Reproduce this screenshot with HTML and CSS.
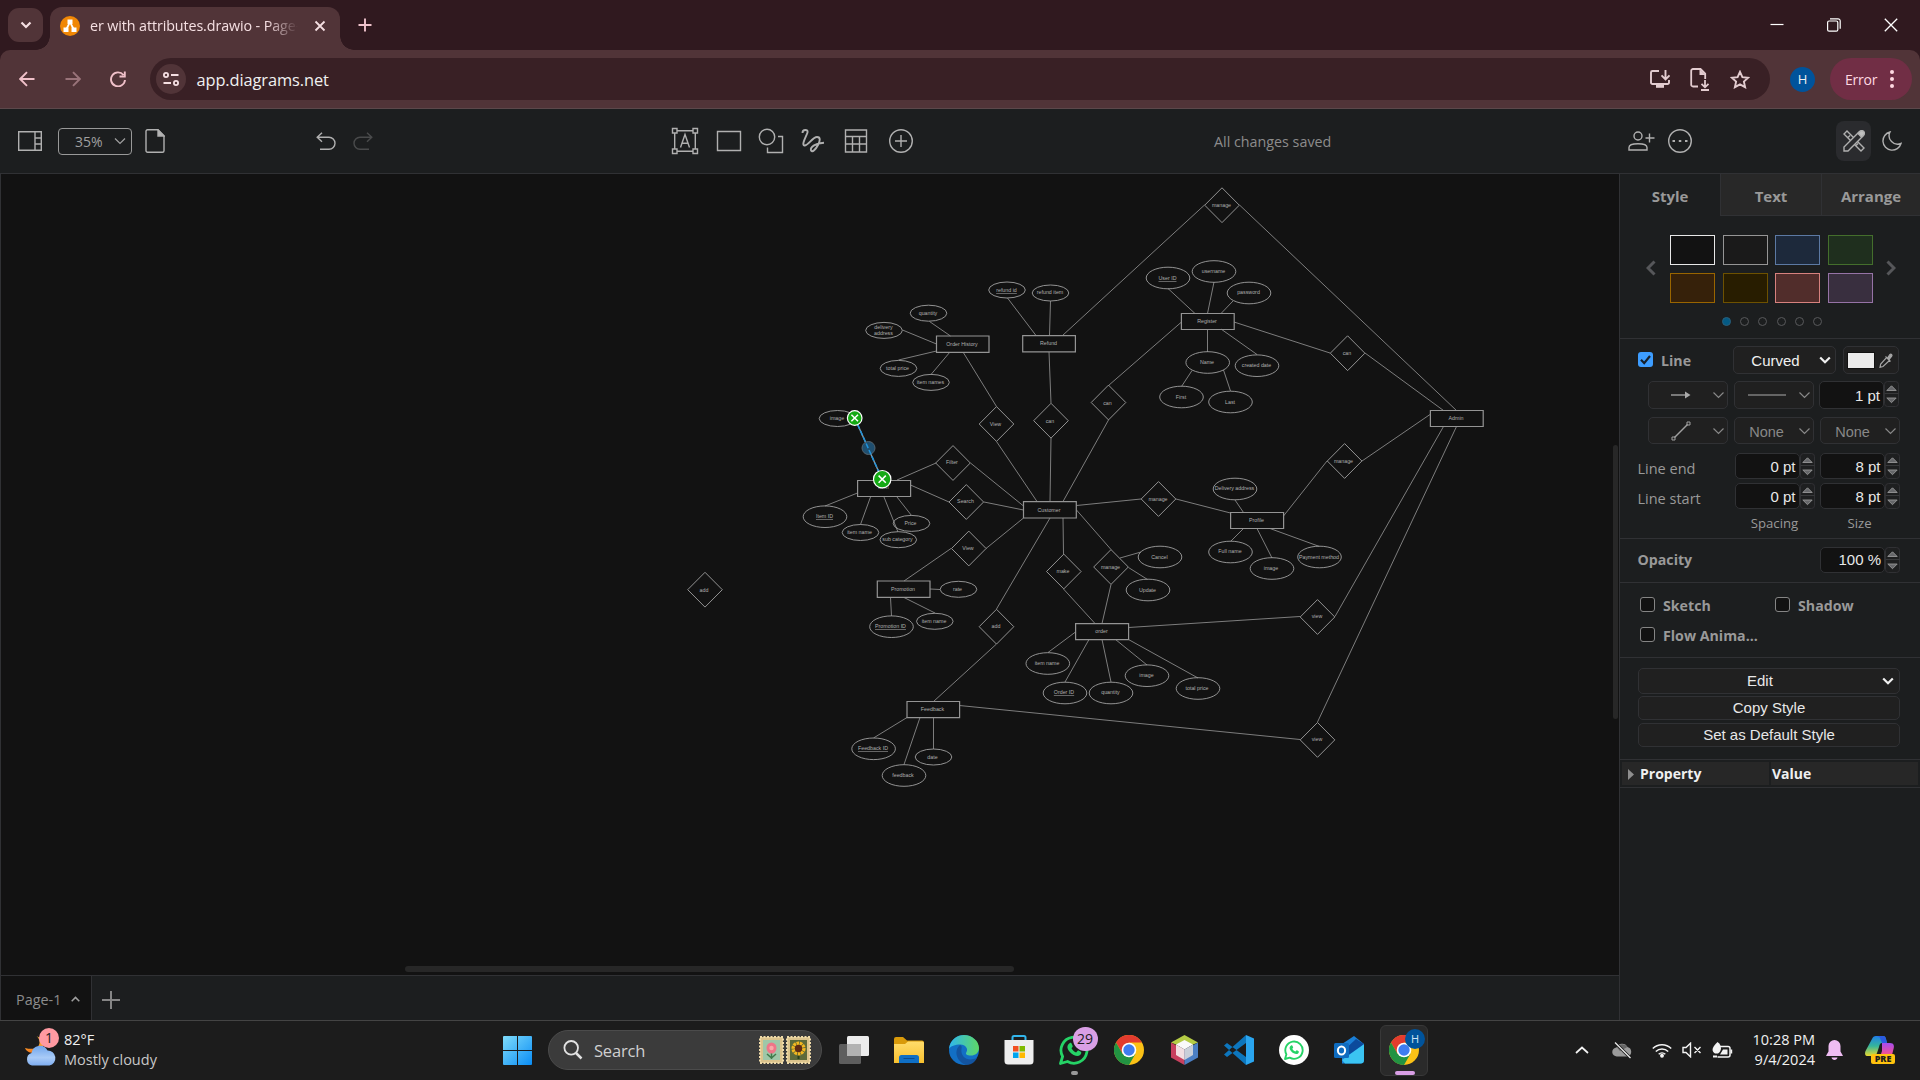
FILE: index.html
```html
<!DOCTYPE html>
<html lang="en">
<head>
<meta charset="utf-8">
<title>er with attributes.drawio - Page-1</title>
<link rel="stylesheet" href="styles.css">
</head>
<body>
<svg width="0" height="0" class="defs">
  <defs>
    <symbol id="chrome" viewBox="0 0 30 30">
      <circle cx="15" cy="15" r="15" fill="#fbc116"/>
      <path d="M2 7.500A15 15 0 0 1 28 7.500L15 7.500L8.500 18.700Z" fill="#e33b2e"/>
      <path d="M2 7.500A15 15 0 0 0 15 30L21.500 18.700L8.500 18.700Z" fill="#229342"/>
      <circle cx="15" cy="15" r="7.300" fill="#fff"/><circle cx="15" cy="15" r="5.700" fill="#3f7cf0"/>
    </symbol>
    <symbol id="wa" viewBox="0 0 30 30">
      <path d="M1.500 28.500L3.600 21.500A13 13 0 1 1 8.500 26.500Z" fill="none" stroke="currentColor" stroke-width="2.800" stroke-linejoin="round"/>
      <path d="M10.500 8.300c1-.8 1.800-.6 2.200.4l1 2.300c.3.800-.8 1.600-1.200 2.200 1 2 2.500 3.300 4.600 4.200l1.500-1.700c.5-.5 1-.3 3.300 1 .9.500.2 2.600-.8 3.400-1.700 1.300-4 1-6.500-.2-3-1.500-6-5-6.200-7.700-.1-1.600 1.100-3.200 2.100-3.900Z" fill="currentColor"/>
    </symbol>
    <symbol id="down" viewBox="0 0 12 8"><path d="M1 1.500l5 5 5-5" fill="none" stroke="currentColor" stroke-width="1.200"/></symbol>
    <symbol id="steps" viewBox="0 0 15 26">
      <rect x=".5" y=".5" width="14" height="25" rx="3" fill="#1e1f20" stroke="#303134"/>
      <path d="M.500 12.500h14" stroke="#38393b"/>
      <path d="M2.800 9.500l4.700-4.700 4.700 4.700z M2.800 17l4.700 4.700 4.700-4.700z" fill="#66676a" stroke="#969696" stroke-width=".9"/>
    </symbol>
    <linearGradient id="winG" x1="0" y1="0" x2="1" y2="1"><stop offset="0" stop-color="#7fdcfb"/><stop offset="1" stop-color="#0a8df5"/></linearGradient>
    <linearGradient id="edgeG" x1="0" y1="0" x2="1" y2="0"><stop offset="0" stop-color="#2fb7ee"/><stop offset="1" stop-color="#5ed765"/></linearGradient>
    <linearGradient id="folderG" x1="0" y1="0" x2="0" y2="1"><stop offset="0" stop-color="#ffdc6b"/><stop offset="1" stop-color="#f8c02e"/></linearGradient>
    <linearGradient id="cloudG" x1="0" y1="0" x2="0" y2="1"><stop offset="0" stop-color="#6fa5ec"/><stop offset=".6" stop-color="#a9cbf7"/><stop offset="1" stop-color="#7eadf0"/></linearGradient>
    <linearGradient id="moonG" x1="0" y1="0" x2="0" y2="1"><stop offset="0" stop-color="#ffc440"/><stop offset="1" stop-color="#f37a1c"/></linearGradient>
    <linearGradient id="copA" x1="0" y1="0" x2="0" y2="1"><stop offset="0" stop-color="#1f7fe8"/><stop offset=".5" stop-color="#35b59b"/><stop offset="1" stop-color="#e9d92e"/></linearGradient>
    <linearGradient id="copB" x1="0" y1="0" x2="0" y2="1"><stop offset="0" stop-color="#a44df0"/><stop offset=".6" stop-color="#ee4f9b"/><stop offset="1" stop-color="#fb8a4a"/></linearGradient>
  </defs>
</svg>

<div class="tabstrip">
  <div class="tab-search"><svg width="12" height="8" viewBox="0 0 12 8"><path d="M1.500 1.500L6 6l4.500-4.500" fill="none" stroke="#f5dfe2" stroke-width="2.200"/></svg></div>
  <div class="tab">
    <svg width="20" height="20" viewBox="0 0 20 20"><circle cx="10" cy="10" r="10" fill="#f08705"/><path d="M10 6L6 14M10 6l4 8" stroke="#fff" stroke-width="1.700"/><path d="M7.500 3.500h5v4.600h-5zM3.500 11.500h5v4.600h-5zM11.500 11.500h5v4.600h-5z" fill="#fff"/></svg>
    <span class="tab-title">er with attributes.drawio - Page-1</span>
    <svg width="12" height="12" viewBox="0 0 12 12"><path d="M1.500 1.500l9 9M10.500 1.500l-9 9" stroke="#f5dfe2" stroke-width="1.800"/></svg>
  </div>
  <svg class="new-tab" width="14" height="14" viewBox="0 0 14 14"><path d="M7 .5v13M.5 7h13" stroke="#efc3cc" stroke-width="1.900"/></svg>
  <div class="win">
    <svg width="14" height="14" viewBox="0 0 14 14"><path d="M.5 6.500h13" stroke="#fff" stroke-width="1.200"/></svg>
    <svg width="14" height="14" viewBox="0 0 14 14" fill="none" stroke="#fff" stroke-width="1.200"><rect x=".6" y="3" width="10.200" height="10.200" rx="1.500"/><path d="M3 .8h8a2.200 2.200 0 0 1 2.200 2.200v7.800"/></svg>
    <svg width="14" height="14" viewBox="0 0 14 14"><path d="M.8.8l12.400 12.400M13.200.8L.8 13.200" stroke="#fff" stroke-width="1.300"/></svg>
  </div>
</div>

<div class="navwrap"><div class="nav">
  <div class="navbtns">
    <svg width="16" height="16" viewBox="0 0 16 16" class="pink"><path d="M15.500 8H1.500M8 1.200L1.200 8 8 14.800"/></svg>
    <svg width="16" height="16" viewBox="0 0 16 16" class="pink dim"><path d="M.5 8h14M8 1.200L14.800 8 8 14.800"/></svg>
    <svg width="16" height="16" viewBox="0 0 16 16" class="pink"><path d="M13.500 4A7 7 0 1 0 15 9M14.800.5v5h-5.300"/></svg>
  </div>
  <div class="omnibox">
    <div class="site"><svg width="16" height="14" viewBox="0 0 16 14" fill="none" stroke="#f5dfe2" stroke-width="1.800"><circle cx="3" cy="3" r="2.100"/><path d="M8 3h7.500M.5 11H8"/><circle cx="13" cy="11" r="2.100"/></svg></div>
    <span class="url">app.diagrams.net</span>
    <div class="omni-icons">
      <svg width="20" height="18" viewBox="0 0 20 18"><path d="M9 1H2.500A1.500 1.500 0 0 0 1 2.500v10A1.500 1.500 0 0 0 2.500 14h15a1.500 1.500 0 0 0 1.500-1.500V10M15.500 0v9M11.500 5.300l4 4 4-4" fill="none" stroke="#e3ccd0" stroke-width="1.900"/><path d="M6 14h8v3.800H6z" fill="#e3ccd0"/></svg>
      <svg width="20" height="23" viewBox="0 0 20 23"><path d="M8 18.500H3A1.800 1.800 0 0 1 1.200 16.700V2.800A1.800 1.800 0 0 1 3 1h7.500l4.700 4.700V11M15 12v7M11.500 15.800l3.500 3.500 3.500-3.500M11 22h8" fill="none" stroke="#e3ccd0" stroke-width="1.800"/><path d="M9.500 1l6 6h-6z" fill="#e3ccd0"/></svg>
      <svg width="20" height="19" viewBox="0 0 20 19"><path d="M10 1.800l2.400 5.300 5.800.6-4.300 3.900 1.200 5.600L10 14.300l-5.100 2.900 1.200-5.600L1.800 7.700l5.800-.6z" fill="none" stroke="#e3ccd0" stroke-width="1.900"/></svg>
    </div>
  </div>
  <div class="avatar">H</div>
  <div class="error"><span>Error</span><svg width="4" height="18" viewBox="0 0 4 18" fill="#ffd9e2"><circle cx="2" cy="2" r="2"/><circle cx="2" cy="9" r="2"/><circle cx="2" cy="16" r="2"/></svg></div>
</div></div>

<div class="appbar">
  <svg class="i-side" width="24" height="20" viewBox="0 0 24 20"><path d="M.7.700h22.600v18.600H.7zM17 .7v18.600M17 7h6M17 13h6"/></svg>
  <div class="zoomsel"><span>35%</span><svg width="12" height="8"><use href="#down"/></svg></div>
  <svg class="i-file" width="20" height="24" viewBox="0 0 20 24"><path d="M2.500.7h10.500l6 6v15a1.500 1.500 0 0 1-1.500 1.500h-15A1.500 1.500 0 0 1 1 21.700V2.200A1.500 1.500 0 0 1 2.500.7z"/><path d="M13 1v6h6z" fill="#b5b5b5"/></svg>
  <svg class="i-undo" width="20" height="18" viewBox="0 0 20 18"><path d="M6 .7L1.200 5.200 6 9.700M1.500 5.200h11.500a6 6 0 0 1 0 12H4"/></svg>
  <svg class="i-redo" width="20" height="18" viewBox="0 0 20 18"><path d="M14 .7l4.800 4.500L14 9.700M18.500 5.200H7a6 6 0 0 0 0 12h9"/></svg>
  <div class="inserts">
    <svg width="28" height="28" viewBox="0 0 28 28"><path d="M1.500 1.500h4.500v4.500H1.500zM22 1.500h4.500v4.500H22zM1.500 22h4.500v4.500H1.500zM22 22h4.500v4.500H22zM6 3.700h16M6 24.300h16M3.700 6v16M24.300 6v16M9.500 20.500L14 7.500l4.500 13M11 16.300h6"/></svg>
    <svg width="28" height="28" viewBox="0 0 28 28"><path d="M2.500 4.500h23v19h-23z"/></svg>
    <svg width="28" height="28" viewBox="0 0 28 28"><circle cx="10" cy="10" r="7.700"/><path d="M21 9.500h4.500v16h-15v-5"/></svg>
    <svg width="28" height="28" viewBox="0 0 28 28"><path d="M3.500 6c0-4 6-4 5-.5C7.500 9 2 18 5.500 18.500c3.500.5 8-8.500 12.500-8.500 4 0 3 4 1 8-2 4-6 8-7 5.500-1.200-3.500 5-7.500 13-7.800" stroke-width="1.900"/></svg>
    <svg width="28" height="28" viewBox="0 0 28 28"><path d="M3.500 3h21v22h-21zM3.500 9.500h21M3.500 17h21M10.500 9.500V25M17.500 9.500V25"/></svg>
    <svg width="28" height="28" viewBox="0 0 28 28"><circle cx="14" cy="14" r="11.300"/><path d="M14 8v12M8 14h12"/></svg>
  </div>
  <span class="saved">All changes saved</span>
  <svg class="i-share" width="28" height="20" viewBox="0 0 28 20"><circle cx="10" cy="5" r="4"/><path d="M1 19v-2.500c0-5 18-5 18 0V19zM21.500 2.500v9M17.500 7h9"/></svg>
  <svg class="i-more" width="24" height="24" viewBox="0 0 24 24"><circle cx="12" cy="12" r="11.300"/><path d="M4.500 12h2.500M10.800 12h2.500M17 12h2.500" stroke-width="2"/></svg>
  <div class="fmt"><svg width="22" height="22" viewBox="0 0 22 22"><path d="M1 4l3-3 17 17-3 3zM5 7.500L7 5.500M8.500 11l2-2M13 15.500l2-2"/><path d="M1 21v-4L16.500 1.500l4 4L5 21z" fill="#2a2b2e"/><path d="M15 3.500l3-3c2 0 3.500 1.500 3.500 3.500l-3 3z" fill="#c0c0c0"/></svg></div>
  <svg class="i-moon" width="20" height="20" viewBox="0 0 20 20"><path d="M8 1a9.200 9.200 0 1 0 11 11.500A8.500 8.500 0 0 1 8 1z"/></svg>
</div>

<div class="main">
  <div class="left">
    <div class="canvas">
      <svg class="diagram" width="1612" height="792" viewBox="1 174 1612 792">
        <path class="edge" d="M950.500 336L929.500 321.500M936.500 344L902.500 330M936.500 351L898.500 360M950 352L931 374.500M963 352L996.500 406.500M996.500 441.500L1037 501.500
        M1036 335.500L1007.500 298M1049.500 335.500L1050.500 301M1062.500 335.500L1204.500 205M1049 352L1051 403M1051 438L1050 501.500
        M1108.500 385.500L1181.500 322M1108.500 420L1063 501.500M897 480L936 463M970.500 463L1023.500 506M910.500 485L949 502M984 502L1023.500 510
        M857.500 493L825 506M870.500 497L860.500 524.500M884 497L894 522L898 532M897 497L911.500 515.500M986 548.500L1023.500 518M951 548.500L904 581
        M930 589L940 589.500M890.500 597.500L891.500 616M904 597.500L935 613M1050 518L996.500 609M996.500 644L933.500 701.500M1063 518L1063.500 554M1063.500 589L1095 623.500
        M1076.500 510L1111 549.500M1111 584.500L1102 623.500M1120 558L1141 552M1128.500 567.500L1147.500 579.500
        M907 717.500L873.500 738M920 717.500L904 764.500M933.500 717.500V749M959.500 705.500L1300 739.500
        M1075.500 632L1048 652.500M1089 639.500L1065 682M1102 639.500L1111 682M1115.500 639.500L1147 665M1128.500 639.500L1198 678M1128.500 627.500L1300 616.500
        M1195 313.500L1168 288.500M1207.500 313.500L1214 282M1221 313.500L1233 301M1207.500 329V352M1221 329L1257 354.500M1234 322L1330 353
        M1192 370.500L1181.500 386.500M1223.500 370L1230.500 391M1239.500 205L1456.500 410.500M1365 353L1443.500 410.500M1430 414.500L1362 461M1443.500 426.500L1335 616.500M1456.500 426.500L1317.500 722
        M1327 461L1283.500 516M1076.500 505.500L1141 499M1176 499L1230.500 513M1235 500L1243.500 512.500M1243.500 528.500L1230.500 541.500M1257 528.500L1272 558M1270 528.500L1319.500 546.500"/>
        <path class="shape rects" d="M936.500 336h52.500v16.300h-52.500zM1022.700 335.600h52.700v16.300h-52.700zM1023.500 501.700h52.800v16.300h-52.800zM857.600 480.500h53v16h-53zM877.300 581h52.700v16.300h-52.700zM907 701.500h52.600v16.200h-52.600zM1075.600 623.600h53v16h-53zM1181.400 313.500h52.800v16h-52.800zM1430.400 410.500h52.800v16h-52.800zM1230.600 512.500h53v16h-53z"/>
        <path class="shape" d="M979.200 424l17.300-17.400 17.300 17.400-17.300 17.400zM1033.700 420.700l17.300-17.400 17.300 17.400-17.300 17.400zM1091.200 402.500l17.300-17.400 17.300 17.400-17.300 17.400zM935.700 463l17.300-17.400 17.300 17.400-17.300 17.400zM949 502l17.300-17.400 17.300 17.400-17.300 17.400zM951.500 548.500l17.300-17.400 17.300 17.400-17.300 17.400zM1046.500 571.500l17.300-17.400 17.300 17.400-17.300 17.400zM1093.700 567l17.300-17.400 17.300 17.400-17.300 17.400zM979.200 626.700l17.300-17.400 17.300 17.400-17.300 17.400zM1204.700 205.200l17.300-17.400 17.300 17.400-17.300 17.400zM1330.300 353.200l17.300-17.400 17.300 17.400-17.300 17.400zM1327.300 461l17.300-17.400 17.300 17.400-17.300 17.400zM1141.200 499l17.300-17.400 17.300 17.400-17.300 17.400zM1300.200 617l17.300-17.400 17.300 17.400-17.300 17.400zM1300.200 739.900l17.300-17.400 17.300 17.400-17.300 17.400zM687.700 589.700l17.300-17.400 17.300 17.400-17.300 17.400z"/>
        <g class="shape">
          <ellipse cx="928.500" cy="313.200" rx="18.300" ry="8"/><ellipse cx="884" cy="330.400" rx="18.300" ry="8"/><ellipse cx="898.500" cy="368.400" rx="18.300" ry="8"/><ellipse cx="931" cy="382.400" rx="18.300" ry="8"/><ellipse cx="1007" cy="290" rx="18.300" ry="8"/><ellipse cx="1050.500" cy="293" rx="18.300" ry="8"/><ellipse cx="837.500" cy="418.500" rx="18.300" ry="8"/><ellipse cx="860.500" cy="532.500" rx="18.300" ry="8"/><ellipse cx="898.300" cy="539.700" rx="18.300" ry="8"/><ellipse cx="911.500" cy="523.400" rx="18.300" ry="8"/><ellipse cx="958.500" cy="589.300" rx="18.300" ry="8"/><ellipse cx="934.800" cy="621.300" rx="18.300" ry="8"/><ellipse cx="933.500" cy="757" rx="18.300" ry="8"/>
          <ellipse cx="825" cy="516.700" rx="21.800" ry="10.800"/><ellipse cx="891.500" cy="626.700" rx="21.800" ry="10.800"/><ellipse cx="873.600" cy="748.800" rx="21.800" ry="10.800"/><ellipse cx="904" cy="775.500" rx="21.800" ry="10.800"/><ellipse cx="1047.800" cy="663.500" rx="21.800" ry="10.800"/><ellipse cx="1065" cy="693" rx="21.800" ry="10.800"/><ellipse cx="1111" cy="693" rx="21.800" ry="10.800"/><ellipse cx="1147" cy="675.700" rx="21.800" ry="10.800"/><ellipse cx="1198" cy="688.500" rx="21.800" ry="10.800"/><ellipse cx="1160" cy="557" rx="21.800" ry="10.800"/><ellipse cx="1148" cy="590" rx="21.800" ry="10.800"/><ellipse cx="1168" cy="278" rx="21.800" ry="10.800"/><ellipse cx="1214" cy="271.500" rx="21.800" ry="10.800"/><ellipse cx="1249" cy="293" rx="21.800" ry="10.800"/><ellipse cx="1207.700" cy="362.500" rx="21.800" ry="10.800"/><ellipse cx="1257" cy="365.700" rx="21.800" ry="10.800"/><ellipse cx="1181.500" cy="397" rx="21.800" ry="10.800"/><ellipse cx="1230.500" cy="402" rx="21.800" ry="10.800"/><ellipse cx="1235" cy="489" rx="21.800" ry="10.800"/><ellipse cx="1230.500" cy="552" rx="21.800" ry="10.800"/><ellipse cx="1272" cy="568.500" rx="21.800" ry="10.800"/><ellipse cx="1319.500" cy="557" rx="21.800" ry="10.800"/>
        </g>
        <g class="lbl">
          <text x="962" y="346">Order History</text><text x="1048.500" y="345">Refund</text><text x="1049" y="511.500">Customer</text><text x="883.500" y="489">Item</text><text x="903" y="591">Promotion</text><text x="932.500" y="711">Feedback</text><text x="1101.500" y="633">order</text><text x="1207" y="323">Register</text><text x="1456" y="420">Admin</text><text x="1256.500" y="522">Profile</text>
          <text x="995.500" y="425.500">View</text><text x="1050" y="422.500">can</text><text x="1107.500" y="404.500">can</text><text x="952" y="464">Filter</text><text x="965.500" y="503">Search</text><text x="968" y="550">View</text><text x="1063" y="573">make</text><text x="1110.500" y="568.500">manage</text><text x="996" y="628">add</text><text x="1221.500" y="207">manage</text><text x="1347" y="355">can</text><text x="1343.500" y="462.500">manage</text><text x="1158" y="500.500">manage</text><text x="1317" y="618">view</text><text x="1317" y="741">view</text><text x="704" y="591.500">add</text>
          <text x="928" y="315">quantity</text><text x="883.500" y="329">delivery</text><text x="883.500" y="335">address</text><text x="897.500" y="370">total price</text><text x="930.500" y="384">item names</text><text class="u" x="1006.500" y="292">refund id</text><text x="1050" y="294">refund item</text><text x="837" y="420">image</text><text x="859.500" y="534">item name</text><text x="897.500" y="541">sub category</text><text x="910.500" y="525">Price</text><text x="957.500" y="591">rate</text><text x="934" y="623">item name</text><text x="932.500" y="759">date</text>
          <text class="u" x="824.500" y="518">Item ID</text><text class="u" x="890.500" y="628">Promotion ID</text><text class="u" x="873" y="750">Feedback ID</text><text x="903" y="777">feedback</text><text x="1047" y="665">item name</text><text class="u" x="1064" y="694">Order ID</text><text x="1110.500" y="694">quantity</text><text x="1146.500" y="677">image</text><text x="1197" y="690">total price</text><text x="1159.500" y="559">Cancel</text><text x="1147.500" y="592">Update</text><text class="u" x="1167.500" y="280">User ID</text><text x="1213.500" y="273">username</text><text x="1248.500" y="294">password</text><text x="1207" y="364">Name</text><text x="1256.500" y="367">created date</text><text x="1181" y="399">First</text><text x="1230" y="404">Last</text><text x="1234.500" y="490">Delivery address</text><text x="1230" y="553">Full name</text><text x="1271" y="570">image</text><text x="1319" y="559">Payment method</text>
        </g>
        <path d="M854.700 418L882 479" stroke="#8aa0ad" stroke-width="1.400"/><circle cx="868.500" cy="448" r="6.500" fill="#1f4f70" stroke="#54646f"/>
        <path d="M854.700 418L882 479" stroke="#1f93dc" stroke-width="1.500" stroke-dasharray="5 2"/>
        <g fill="#14a914" stroke="#fff" stroke-width="1.200"><circle cx="854.700" cy="418" r="7.300"/><circle cx="882.200" cy="479.200" r="8.700"/></g>
        <path d="M851.400 414.700l6.600 6.600m0-6.600l-6.600 6.600M878.600 475.600l7.200 7.200m0-7.200l-7.200 7.200" stroke="#fff" stroke-width="1.500"/>
      </svg>
      <div class="vbar"></div>
      <div class="hbar"></div>
    </div>
    <div class="pages">
      <div class="page">Page-1<svg width="9" height="6" viewBox="0 0 9 6"><path d="M.7 5.200l3.800-3.800 3.800 3.800" fill="none" stroke="#a0a0a0" stroke-width="1.500"/></svg></div>
      <svg class="addpage" width="18" height="18" viewBox="0 0 18 18"><path d="M9 0v18M0 9h18" stroke="#858585" stroke-width="2"/></svg>
    </div>
  </div>

  <div class="side">
    <div class="stabs"><div class="on">Style</div><div>Text</div><div>Arrange</div></div>
    <div class="sec presets">
      <div class="prow">
        <svg width="10" height="16" viewBox="0 0 10 16"><path d="M8.500 1.500L2 8l6.500 6.500" fill="none" stroke="#56575a" stroke-width="3"/></svg>
        <div class="sw"><i class="a"></i><i class="b"></i><i class="c"></i><i class="d"></i><i class="e"></i><i class="f"></i><i class="g"></i><i class="h"></i></div>
        <svg width="10" height="16" viewBox="0 0 10 16"><path d="M1.500 1.500L8 8l-6.500 6.500" fill="none" stroke="#56575a" stroke-width="3"/></svg>
      </div>
      <div class="dots"><b class="on"></b><b></b><b></b><b></b><b></b><b></b></div>
    </div>
    <div class="sec line">
      <div class="r1">
        <span class="chk on"><svg width="15" height="15" viewBox="0 0 15 15"><path d="M3 7.800l3.200 3.400L12 4" fill="none" stroke="#16202b" stroke-width="2.200"/></svg></span><strong>Line</strong>
        <div class="btn curved"><span>Curved</span><svg width="12" height="8" viewBox="0 0 12 8"><path d="M1.200 1.500L6 6.200l4.800-4.700" fill="none" stroke="#f0f0f0" stroke-width="2.200"/></svg></div>
        <div class="btn color"><i></i><svg width="14" height="15" viewBox="0 0 14 15" fill="none" stroke="#a5a5a5" stroke-width="1.200"><path d="M7.500 4.500l3 3L4 13.500l-3 .8.700-3.300zM6.500 3.500l5 5"/><path d="M8.500 5l2.500-3.500c1-1 2.500.3 1.700 1.700L10 6.500z" fill="#a5a5a5"/></svg></div>
      </div>
      <div class="r2">
        <div class="btn dd"><svg width="20" height="8" viewBox="0 0 20 8"><path d="M0 4h15" stroke="#aaa" stroke-width="1.300"/><path d="M14 .5L19.500 4 14 7.500z" fill="#aaa"/></svg><svg width="13" height="8"><use href="#down"/></svg></div>
        <div class="btn dd"><svg width="38" height="4" viewBox="0 0 38 4"><path d="M0 2h38" stroke="#aaa" stroke-width="1.200"/></svg><svg width="13" height="8"><use href="#down"/></svg></div>
        <div class="num"><span>1 pt</span><svg width="15" height="26"><use href="#steps"/></svg></div>
      </div>
      <div class="r2 r3">
        <div class="btn dd"><svg width="20" height="20" viewBox="0 0 20 20" fill="none" stroke="#a0a0a0"><path d="M3.500 16.500l13-13" stroke-width="1.400"/><path d="M1 16h3v3H1zM16 1h3v3h-3z"/></svg><svg width="13" height="8"><use href="#down"/></svg></div>
        <div class="btn dd"><span>None</span><svg width="13" height="8"><use href="#down"/></svg></div>
        <div class="btn dd"><span>None</span><svg width="13" height="8"><use href="#down"/></svg></div>
      </div>
      <div class="r4"><label>Line end</label><div class="num"><span>0 pt</span><svg width="15" height="26"><use href="#steps"/></svg></div><div class="num"><span>8 pt</span><svg width="15" height="26"><use href="#steps"/></svg></div></div>
      <div class="r4"><label>Line start</label><div class="num"><span>0 pt</span><svg width="15" height="26"><use href="#steps"/></svg></div><div class="num"><span>8 pt</span><svg width="15" height="26"><use href="#steps"/></svg></div></div>
      <div class="r4 caps"><label></label><span>Spacing</span><span>Size</span></div>
    </div>
    <div class="sec opacity"><strong>Opacity</strong><div class="num"><span>100 %</span><svg width="15" height="26"><use href="#steps"/></svg></div></div>
    <div class="sec checks">
      <div><span class="chk"></span><strong>Sketch</strong></div><div><span class="chk"></span><strong>Shadow</strong></div><div><span class="chk"></span><strong>Flow Anima...</strong></div>
    </div>
    <div class="sec actions">
      <div class="btn edit"><span>Edit</span><svg width="12" height="8" viewBox="0 0 12 8"><path d="M1.200 1.500L6 6.200l4.800-4.700" fill="none" stroke="#f0f0f0" stroke-width="2.200"/></svg></div>
      <div class="btn">Copy Style</div>
      <div class="btn">Set as Default Style</div>
    </div>
    <div class="props"><div><svg width="6" height="11" viewBox="0 0 6 11"><path d="M0 0l6 5.500L0 11z" fill="#8e8e8e"/></svg>Property</div><div>Value</div></div>
  </div>
</div>

<div class="taskbar">
  <div class="weather">
    <div class="wicon">
      <svg width="32" height="30" viewBox="0 0 32 30"><path d="M11.500 0c6 5 4 16-11.500 12 1.500 5 10 7 16 2 4-4 2-11-4.500-14z" fill="url(#moonG)"/><path d="M7 29.500a6.500 6.500 0 0 1-.5-12.500 8.500 8.500 0 0 1 16-2.500 7.600 7.600 0 0 1 2 15z" fill="url(#cloudG)"/></svg>
      <span class="wbadge">1</span>
    </div>
    <div class="wtext"><span>82°F</span><span class="sub">Mostly cloudy</span></div>
  </div>
  <svg class="start" width="29" height="29" viewBox="0 0 29 29" fill="url(#winG)"><path d="M1 0h13v14H0V1a1 1 0 0 1 1-1zM15 0h13a1 1 0 0 1 1 1v13H15zM0 15h14v14H1a1 1 0 0 1-1-1zM15 15h14v13a1 1 0 0 1-1 1H15z"/></svg>
  <div class="search">
    <svg width="20" height="20" viewBox="0 0 20 20" fill="none" stroke="#e2e2e2"><circle cx="8.200" cy="7.800" r="6.800" stroke-width="1.800"/><path d="M13 13l5.500 5.500" stroke-width="2.500"/></svg>
    <span>Search</span>
    <svg class="stamps" width="52" height="28" viewBox="0 0 52 28"><rect x="1" y="1" width="23" height="26" fill="#dcc48d" stroke="#f0dba9" stroke-width="2" stroke-dasharray="2 1.500"/><rect x="4" y="4" width="17" height="20" fill="#9fc7a8"/><path d="M12.500 16v7M8 18l4.500 4 4.500-4" stroke="#3f7b4a" stroke-width="1.500" fill="none"/><ellipse cx="12.500" cy="12" rx="5" ry="5.500" fill="#ee7688"/><circle cx="12.500" cy="12" r="2.200" fill="#f9a9a8"/>
    <rect x="28" y="1" width="23" height="26" fill="#dcc48d" stroke="#f0dba9" stroke-width="2" stroke-dasharray="2 1.500"/><rect x="31" y="4" width="17" height="20" fill="#5d6a3a"/><path d="M39.500 16v7" stroke="#28401c" stroke-width="2"/><circle cx="39.500" cy="12.500" r="5.300" fill="none" stroke="#f4b71f" stroke-width="3.500" stroke-dasharray="2.500 .7"/><circle cx="39.500" cy="12.500" r="3.700" fill="#5f2a14"/></svg>
  </div>
  <div class="apps">
    <div><svg width="30" height="28" viewBox="0 0 30 28"><rect x="8" y="0" width="22" height="20" rx="1.500" fill="#ececec"/><rect x="0" y="8" width="22" height="20" rx="1.500" fill="#6a6a6a" opacity=".85"/><path d="M8 8h14v12H8z" fill="#b2b2b2"/></svg></div>
    <div><svg width="30" height="26" viewBox="0 0 30 26"><path d="M0 2a2 2 0 0 1 2-2h7l4 3.500h15a2 2 0 0 1 2 2V12H0z" fill="#d99a0a"/><path d="M0 7h11l3-2.500h14.500a1.500 1.500 0 0 1 1.500 1.500V26H0z" fill="url(#folderG)"/><path d="M5 26v-5.500a2.500 2.500 0 0 1 2.500-2.500h15a2.500 2.500 0 0 1 2.500 2.500V26z" fill="#0f6fc5"/><path d="M9.500 21.500h11" stroke="#0a4b90"/></svg></div>
    <div><svg width="30" height="30" viewBox="0 0 30 30"><circle cx="15" cy="15" r="15" fill="#126fc5"/><path d="M0 14C1 4 9 0 15 0c8 0 15 6 15 13 0 5-4 7.500-8 7.500-4.500 0-6-1.500-4.500-3.500 2-3-1-7.500-6-7.500C6 9.500 1.500 11 0 14z" fill="url(#edgeG)"/><path d="M11 10c-7 6-3 17 6 19.800C23 30 27 26 28 22.500c-8 5-17 0-15.500-9 .5-2 0-3-1.500-3.500z" fill="#1354a0"/></svg></div>
    <div><svg width="30" height="30" viewBox="0 0 30 30"><path d="M8.500 6V2.500A1.500 1.500 0 0 1 10 1h10a1.500 1.500 0 0 1 1.500 1.500V6" fill="none" stroke="#32b6ec" stroke-width="2"/><path d="M.5 5h29v21a3.500 3.500 0 0 1-3.500 3.500H4A3.500 3.500 0 0 1 .5 26z" fill="#eee"/><path fill="#f25022" d="M9 11h5.500v5.500H9z"/><path fill="#7fba00" d="M15.500 11H21v5.500h-5.500z"/><path fill="#00a4ef" d="M9 17.500h5.500V23H9z"/><path fill="#ffb900" d="M15.500 17.500H21V23h-5.500z"/></svg></div>
    <div class="wa"><svg width="30" height="30"><use href="#wa"/></svg><span class="cnt">29</span><em></em></div>
    <div><svg width="30" height="30"><use href="#chrome"/></svg></div>
    <div><svg width="27" height="30" viewBox="0 0 27 30"><path d="M13.500 0L27 7.500 13.500 13 0 7.500z" fill="#b5cc45"/><path d="M0 7.500v15L13.500 30V15z" fill="#c8405e"/><path d="M27 7.500v15L13.500 30V15z" fill="#4b7fc4"/><path d="M13.500 5l8.500 4.500-8.500 5L5 9.500z" fill="#fafafa"/><path d="M5 9.500l8.500 5V25L5 20z" fill="#f2dfe2"/><path d="M22 9.500l-8.500 5V25l8.500-5z" fill="#c9cfd9"/></svg></div>
    <div><svg width="30" height="30" viewBox="0 0 30 30"><path d="M22 0l8 3.500v23L22 30z" fill="#2aa5ef"/><path d="M22 0L0 19.500l3 2.500L22 8zM22 30L0 10.500 3 8l19 14z" fill="#0d76bd"/></svg></div>
    <div class="waw"><svg width="20" height="20"><use href="#wa"/></svg></div>
    <div><svg width="30" height="28" viewBox="0 0 30 28"><path d="M8 8L20 0l10 8v16a3.500 3.500 0 0 1-3.500 3.500H8z" fill="#1a7fd6"/><path d="M8 24L30 8v16a3.500 3.500 0 0 1-3.500 3.500H11z" fill="#3bc4f2"/><path d="M30 8L13 20l-5-4L22 3z" fill="#0c4a9c"/><rect y="7" width="15" height="15" rx="1.500" fill="#0f6cc0"/><ellipse cx="7.500" cy="14.500" rx="3.600" ry="4" fill="none" stroke="#fff" stroke-width="2"/></svg></div>
    <div class="cur"><svg width="30" height="30"><use href="#chrome"/></svg><span class="hb">H</span><em></em></div>
  </div>
  <div class="tray">
    <svg width="14" height="8" viewBox="0 0 14 8"><path d="M1 7l6-5.500L13 7" fill="none" stroke="#f3f3f3" stroke-width="1.700"/></svg>
    <svg class="t2" width="20" height="18" viewBox="0 0 20 18"><path d="M5 15.500a4.500 4.500 0 0 1-.5-9 6 6 0 0 1 11-.5 5 5 0 0 1 .5 9.500z" fill="#9a9a9a"/><path d="M5 6.500a6 6 0 0 1 10.500-.5L8 10z" fill="#666"/><path d="M3 1.500L18.500 17" stroke="#1c1c1c" stroke-width="3"/><path d="M3 1.500L18.500 17" stroke="#eee" stroke-width="1.200"/></svg>
    <svg class="t3" width="20" height="16" viewBox="0 0 20 16" fill="none" stroke="#f3f3f3" stroke-width="1.500"><path d="M.8 6.500a13 13 0 0 1 18.400 0M3.800 9.500a8.800 8.800 0 0 1 12.400 0M6.700 12.200a4.800 4.800 0 0 1 6.600 0"/><circle cx="10" cy="13.800" r="1.200" fill="#f3f3f3"/></svg>
    <svg class="t4" width="20" height="16" viewBox="0 0 20 16" fill="none" stroke="#f3f3f3" stroke-width="1.400"><path d="M1 5.500h3l4.500-4.300v13.600L4 10.500H1zM12.500 5l6 6M18.500 5l-6 6"/></svg>
    <svg class="t5" width="21" height="17" viewBox="0 0 21 17"><path d="M8 4.500h8a2 2 0 0 1 2 2V13a2 2 0 0 1-2 2H5.500" fill="none" stroke="#f3f3f3" stroke-width="1.500"/><path d="M18.500 7.500h1.700v4h-1.700zM11 7.500h4.500v5H8z" fill="#f3f3f3"/><path d="M5.500 0c4.500 3 4.500 9 .5 11.500H3C-1 9 0 5 5.500 0z" fill="#f3f3f3"/><path d="M1 14.500h4" stroke="#f3f3f3" stroke-width="2"/></svg>
    <div class="clock"><span>10:28 PM</span><span>9/4/2024</span></div>
    <svg class="bell" width="17" height="20" viewBox="0 0 17 20" fill="#efbdf3"><path d="M8.500 0a6 6 0 0 1 6 6v5.500l2.300 4V16H.2v-.5l2.300-4V6a6 6 0 0 1 6-6zM5.500 17.500h6c-.5 3.200-5.500 3.200-6 0z"/></svg>
    <div class="cop"><svg width="30" height="24" viewBox="0 0 30 24"><path d="M7 3c.8-2 2-3 4-3h7c2 0 2.500 1 3 3l1 4h-5c-2 0-2.500 2-3 4l-2 6c-.8 2-1.500 3-3.500 3H3c-3 0-3.500-2-2.500-5z" fill="url(#copA)"/><path d="M11 0h7c2 0 2.500 1 3 3l1 4h-5L15 2c-.5-1.300-2-2-4-2z" fill="#2a5be0"/><path d="M17 7h8c4 0 4.500 3 3.500 6l-2 8c-.8 2-1.500 3-3.500 3h-9l3-9z" fill="url(#copB)"/></svg><span>PRE</span></div>
  </div>
</div>
</body>
</html>
```
FILE: styles.css
```css
* { box-sizing: border-box; }
body { margin: 0; width: 1920px; height: 1080px; overflow: hidden; display: flex; flex-direction: column; background: #121212; font-family: "Open Sans", "Noto Sans", sans-serif; font-size: 14px; color: #f0f0f0; }
svg { display: block; flex: none; }
.defs { position: absolute; }

/* tab strip */
.tabstrip { flex: none; height: 50px; background: #30191f; display: flex; align-items: flex-start; padding-left: 8px; }
.tab-search { width: 35px; height: 34px; margin-top: 8px; border-radius: 11px; background: #513438; display: grid; place-items: center; }
.tab { position: relative; margin: 7px 0 0 7px; width: 290px; height: 43px; background: #513438; border-radius: 12px 12px 0 0; display: flex; align-items: center; padding: 0 14px 6px 10px; }
.tab::before, .tab::after { content: ""; position: absolute; bottom: 0; width: 14px; height: 14px; }
.tab::before { left: -14px; background: radial-gradient(circle at 0 0, transparent 13.500px, #513438 14px); }
.tab::after { right: -14px; background: radial-gradient(circle at 100% 0, transparent 13.500px, #513438 14px); }
.tab-title { margin: 0 auto 0 10px; width: 208px; overflow: hidden; white-space: nowrap; font-size: 14.300px; letter-spacing: -.1px; color: #f5dfe2; -webkit-mask-image: linear-gradient(90deg, #000 85%, transparent); mask-image: linear-gradient(90deg, #000 85%, transparent); }
.new-tab { margin: 18px 0 0 18px; }
.win { margin: 18px 22px 0 auto; display: flex; gap: 43px; }

/* navigation */
.navwrap { flex: none; height: 59px; background: #30191f; }
.nav { height: 59px; background: #513438; border-radius: 10px 10px 0 0; border-bottom: 1px solid #5c484b; display: flex; align-items: center; padding-left: 19px; }
.navbtns { display: flex; gap: 29.500px; width: 131px; }
.pink { fill: none; stroke: #f0c0c9; stroke-width: 1.900; }
.dim { opacity: .45; }
.omnibox { width: 1620px; height: 42px; border-radius: 21px; background: #392025; display: flex; align-items: center; padding-left: 6px; }
.site { width: 30px; height: 30px; border-radius: 50%; background: #513438; display: grid; place-items: center; }
.url { margin-left: 10.500px; font-size: 16.400px; letter-spacing: -.1px; padding-bottom: 0; }
.omni-icons { margin: 0 20px 0 auto; display: flex; align-items: center; gap: 20px; }
.avatar { margin-left: 20px; width: 25px; height: 25px; border-radius: 50%; background: #00539b; text-align: center; font-size: 13px; line-height: 24px; }
.error { margin-left: 15px; width: 82px; height: 42px; border-radius: 21px; background: #712e45; display: flex; align-items: center; padding-left: 15px; font-size: 14px; letter-spacing: -.2px; color: #ffd9e2; }
.error svg { margin-left: 13px; }

/* editor toolbar */
.appbar { flex: none; height: 65px; background: #1c1e1f; border-bottom: 1px solid #303134; display: flex; align-items: center; padding-left: 18px; color: #8c8c8c; }
.appbar svg { fill: none; stroke: #b0b0b0; stroke-width: 1.400; }
.zoomsel { margin-left: 16px; width: 74px; height: 27px; border: 1px solid #999; border-radius: 4px; display: flex; align-items: center; justify-content: space-between; padding: 0 5px 0 16px; color: #a0a0a0; }
.i-file { margin-left: 13px; }
.i-undo { margin-left: 151px; }
.i-redo { margin-left: 17px; opacity: .3; }
.inserts { margin-left: 298px; width: 244px; display: flex; }
.inserts svg + svg { margin-left: 14.600px; }
.inserts svg:nth-child(2) { margin-left: 16px; }
.inserts svg:nth-child(3) { margin-left: 13.500px; }
.inserts svg:nth-child(6) { margin-left: 17px; }
.saved { margin-left: 299px; width: 120px; font-size: 14.300px; white-space: nowrap; }
.i-share { margin-left: 294px; }
.i-more { margin-left: 12px; }
.fmt { margin-left: 144px; width: 35px; height: 40px; border-radius: 8px; background: #2a2b2e; display: grid; place-items: center; }
.i-moon { margin-left: 11px; }

.main { flex: none; height: 846px; display: flex; }
.left { width: 1619px; display: flex; flex-direction: column; }
.canvas { height: 801px; border-left: 1px solid #303134; display: grid; grid-template-columns: 1612px 5px; grid-template-rows: 792px 6px; }
.edge { fill: none; stroke: #7d7d7d; stroke-width: 1; }
.shape { fill: none; stroke: #a0a0a0; stroke-width: .900; }
.rects { stroke: #949494; stroke-width: 1.200; }
.lbl { font: 5.300px "Liberation Sans", Arial, sans-serif; fill: #b0b0b0; text-anchor: middle; }
.u { text-decoration: underline; }
.vbar { margin-top: 271px; height: 274px; border-radius: 3px; background: #272727; }
.hbar { margin-left: 404px; width: 609px; height: 6px; border-radius: 3px; background: #272727; }
.pages { height: 45px; border-top: 1px solid #303134; background: #1c1e1f; display: flex; align-items: center; }
.page { height: 44px; width: 92px; border: 1px solid #303134; border-width: 0 1px; background: #121212; color: #8c8c8c; font-size: 14.400px; display: flex; align-items: center; padding: 2px 0 0 15px; }
.page svg { margin-left: 10px; }
.addpage { margin: 3px 0 0 10px; }

/* format panel */
.side { width: 301px; border-left: 1px solid #303134; background: #1c1e1f; color: #999; font-size: 15px; }
.stabs { display: grid; grid-template-columns: 100px 101px 99px; grid-template-rows: 42px; height: 42px; font-weight: 700; text-align: center; line-height: 45px; }
.stabs div + div { background: #282828; border-left: 1px solid #303134; border-bottom: 1px solid #303134; line-height: 44px; }
.sec { border-bottom: 1px solid #303134; }
.presets { height: 123px; padding-top: 19px; }
.prow { display: flex; align-items: center; justify-content: space-between; padding: 0 24px 0 26px; }
.prow > svg { margin-bottom: 3px; }
.sw { display: grid; grid-template-columns: repeat(4, 45px); grid-auto-rows: 30px; gap: 8px 7.800px; margin-left: 1px; }
.sw i { border: 1px solid; }
.sw .a { background: #121212; border-color: #e8e8e8; } .sw .b { background: #1a1a1a; border-color: #959595; }
.sw .c { background: #1d293b; border-color: #5c79a3; } .sw .d { background: #1f2f1e; border-color: #446e2c; }
.sw .e { background: #36210a; border-color: #996500; } .sw .f { background: #281d00; border-color: #6d5100; }
.sw .g { background: #512d2b; border-color: #d7817e; } .sw .h { background: #392f3f; border-color: #9673a6; }
.dots { display: flex; justify-content: center; gap: 9.200px; margin-top: 14px; padding-left: 4px; }
.dots b { width: 9px; height: 9px; border: 1px solid #58595b; border-radius: 50%; }
.dots .on { background: #045a84; border-color: #2b5f7a; }
.chk { width: 15px; height: 15px; border: 1px solid #858585; border-radius: 3px; background: #121212; flex: none; }
.chk.on { background: #3d9dff; border: 0; }
.btn { border: 1px solid #303134; border-radius: 5px; background: #202020; display: flex; align-items: center; justify-content: center; font-family: "Liberation Sans", Arial, sans-serif; }
.line { height: 200px; padding-top: 7px; }
.r1 { display: flex; align-items: center; padding-left: 18px; height: 28px; }
.r1 .chk { margin-bottom: 2px; }
.r1 strong, .opacity strong, .checks strong { font-size: 14.200px; }
.r1 strong { margin-left: 8px; width: 72px; }
.curved { width: 103px; height: 28px; color: #f0f0f0; padding-left: 13px; gap: 19px; }
.color { width: 56px; height: 28px; margin-left: 7px; gap: 4px; padding-right: 2px; }
.color i { width: 28px; height: 17px; background: #ececec; border: 1px solid #121212; }
.r2 { display: grid; grid-template-columns: 80px 80px 80px; gap: 6px; margin: 7px 0 0 28px; }
.r3 { margin-top: 8px; }
.dd { height: 28px; justify-content: space-between; padding: 0 2px 0 0; font-size: 14.500px; color: #888; }
.r3 .dd { height: 27px; }
.dd > :first-child { margin: 0 auto; }
.dd > span { padding-top: 2px; }
.num { display: flex; width: 80px; align-items: flex-start; font-family: "Liberation Sans", Arial, sans-serif; color: #e8e8e8; }
.num span { width: 65px; height: 26px; border: 1px solid #303134; border-radius: 5px; background: #121212; text-align: right; padding-right: 3px; line-height: 25px; }
.r2 .num { margin-left: -1px; }
.r2 .num span { height: 28px; line-height: 28px; }
.r4 { display: grid; grid-template-columns: 92px 80px 80px; column-gap: 5px; margin: 4px 0 0 17.500px; align-items: center; font-size: 15px; }
.r3 + .r4 { margin-top: 9px; }
.r4 label { padding-top: 5px; font-size: 14.500px; white-space: nowrap; }
.caps { font-size: 13.200px; margin-top: 5px; line-height: 18px; text-align: center; }
.opacity { height: 44px; display: flex; align-items: flex-start; justify-content: space-between; padding: 8px 20px 0 17.500px; }
.opacity strong { padding-top: 2.500px; }
.opacity .num span { line-height: 24px; }
.checks { height: 75px; display: grid; grid-template-columns: 135px 150px; grid-auto-rows: 30px; padding: 6px 0 0 20px; }
.checks div { display: flex; align-items: center; }
.checks strong { margin-left: 8px; padding-top: 2px; }
.actions { height: 102px; padding: 10px 20px 0 18px; display: flex; flex-direction: column; color: #e8e8e8; font-size: 15px; }
.actions .btn { height: 24px; margin-bottom: 3px; padding-bottom: 1px; }
.actions .edit { height: 26px; margin-bottom: 2px; padding-left: 108px; padding-right: 5px; justify-content: space-between; }
.props { display: grid; grid-template-columns: 147px 147px; gap: 2px; padding: 2px; height: 28px; border-bottom: 1px solid #303134; color: #f0f0f0; font-weight: 700; font-size: 14px; }
.props div { background: #272727; display: flex; align-items: center; padding-left: 1px; }
.props svg { margin: 1px 6px 0 5px; }

/* taskbar */
.taskbar { flex: none; height: 60px; background: #1c1c1c; border-top: 1px solid #444; display: flex; align-items: center; padding-bottom: 1px; font-size: 14px; }
.weather { width: 503px; display: flex; padding-left: 25px; }
.wicon { position: relative; width: 39px; padding-top: 5px; }
.wbadge { position: absolute; left: 14px; top: -3px; width: 20px; height: 20px; border-radius: 50%; background: #ff9aa2; color: #222; text-align: center; line-height: 20px; }
.wtext { display: flex; flex-direction: column; line-height: 20px; font-size: 14.500px; margin-top: -1px; }
.wtext .sub { color: #c8c8c8; }
.search { margin-left: 16px; width: 274px; height: 40px; border-radius: 20px; background: #3b3b3b; border: 1px solid #4b4b4b; display: flex; align-items: center; padding-left: 14px; color: #d0d0d0; font-size: 16.500px; }
.search span { margin-left: 11px; letter-spacing: -.2px; }
.stamps { margin: 0 10px 0 auto; }
.apps { margin-left: 4.500px; display: grid; grid-template-columns: repeat(11, 55px); height: 59px; }
.apps div { position: relative; display: grid; place-items: center; }
.apps em { position: absolute; bottom: 5px; left: 24px; width: 7px; height: 4px; border-radius: 2px; background: #999; }
.wa { color: #25d366; }
.cnt { position: absolute; left: 26px; top: 6px; width: 25px; height: 24px; border-radius: 12px; background: #d99fe5; color: #1c1c1c; text-align: center; line-height: 24px; }
.apps .waw { margin: 14.500px 12.500px; border-radius: 50%; background: #fff; color: #25d366; }
.apps .cur { margin: 4px 3.500px; background: #2a2a2a; border: 1px solid #383838; border-radius: 6px; }
.hb { position: absolute; left: 24px; top: 3px; width: 20px; height: 20px; border-radius: 50%; background: #00539b; color: #cfe3f5; font-size: 11px; line-height: 20px; text-align: center; }
.apps .cur em { left: 14px; bottom: 0; width: 20px; background: #d99fe5; }
.tray { margin-left: auto; display: flex; align-items: center; padding-right: 25px; }
.t2 { margin-left: 23px; } .t3 { margin-left: 20px; } .t4 { margin-left: 10px; } .t5 { margin-left: 10px; }
.clock { width: 82px; display: flex; flex-direction: column; text-align: right; line-height: 20px; font-size: 14.500px; margin-top: -1px; }
.bell { margin-left: 11px; }
.cop { position: relative; margin-left: 22px; width: 30px; height: 28px; }
.cop span { position: absolute; left: 6px; top: 18px; width: 24px; height: 10px; border-radius: 2px; background: #ffc20e; color: #1c1c1c; font-size: 9px; line-height: 10px; font-weight: 800; text-align: center; }
```
